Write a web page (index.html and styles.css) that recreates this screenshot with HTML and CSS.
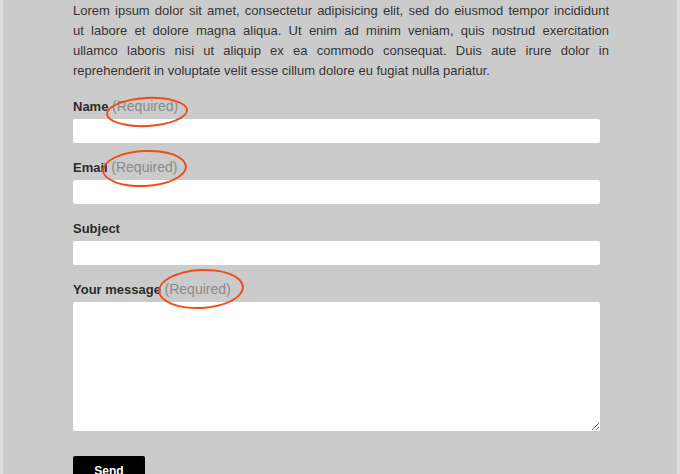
FILE: index.html
```html
<!DOCTYPE html>
<html lang="en">
<head>
<meta charset="utf-8">
<title>Contact form</title>
<link rel="stylesheet" href="styles.css">
</head>
<body>
<div class="page">
  <div class="content">
    <p class="intro">
      <span class="line">Lorem ipsum dolor sit amet, consectetur adipisicing elit, sed do eiusmod tempor incididunt</span>
      <span class="line">ut labore et dolore magna aliqua. Ut enim ad minim veniam, quis nostrud exercitation</span>
      <span class="line">ullamco laboris nisi ut aliquip ex ea commodo consequat. Duis aute irure dolor in</span>
      <span class="line last">reprehenderit in voluptate velit esse cillum dolore eu fugiat nulla pariatur.</span>
    </p>
    <form class="form">
      <div class="field">
        <label class="label">Name <span class="req">(Required)</span><span class="ring ring-name"></span></label>
        <input class="input" type="text">
      </div>
      <div class="field">
        <label class="label">Email <span class="req">(Required)</span><span class="ring ring-email"></span></label>
        <input class="input" type="text">
      </div>
      <div class="field">
        <label class="label">Subject</label>
        <input class="input" type="text">
      </div>
      <div class="field">
        <label class="label">Your message <span class="req">(Required)</span><span class="ring ring-msg"></span></label>
        <textarea class="input area"></textarea>
      </div>
      <button class="send" type="button">Send</button>
    </form>
  </div>
</div>
</body>
</html>
```
FILE: styles.css
```css
html, body {
  margin: 0;
  padding: 0;
}
body {
  background: #dedede;
  font-family: "Liberation Sans", Arial, sans-serif;
  overflow: hidden;
}
.page {
  margin: 0 3px;
  background: #cbcbcb;
  height: 474px;
  overflow: hidden;
}
.content {
  padding: 1px 0 0 70px;
}
.intro {
  margin: 0;
  width: 536px;
  font-size: 13px;
  line-height: 20px;
  color: #353535;
}
.line {
  display: block;
  white-space: nowrap;
  text-align: justify;
  text-align-last: justify;
}
.line.last {
  text-align-last: left;
}
.form {
  margin-top: 18px;
  display: flex;
  flex-direction: column;
  align-items: flex-start;
}
.field {
  display: flex;
  flex-direction: column;
  gap: 4px;
  margin-bottom: 17px;
}
.label {
  position: relative;
  display: block;
  height: 16px;
  font-size: 13px;
  line-height: 16px;
  font-weight: bold;
  color: #2b2b2b;
  white-space: nowrap;
}
.req {
  font-weight: normal;
  font-size: 14px;
  line-height: 1;
  color: #8a8a8a;
}
.ring {
  position: absolute;
  border: 2.5px solid #f04c1a;
  border-radius: 50%;
  box-sizing: border-box;
  transform: rotate(-3deg);
}
.ring-name {
  left: 33px;
  top: -2px;
  width: 82px;
  height: 30px;
}
.ring-email {
  left: 29px;
  top: -10px;
  width: 85px;
  height: 37px;
}
.ring-msg {
  left: 85px;
  top: -13px;
  width: 86px;
  height: 40px;
}
.input {
  width: 527px;
  height: 24px;
  border: none;
  border-radius: 2px;
  background: #ffffff;
  box-sizing: border-box;
  margin: 0;
  padding: 4px 6px;
  font-family: "Liberation Sans", Arial, sans-serif;
  font-size: 12px;
  outline: none;
}
.area {
  height: 129px;
  resize: both;
  display: block;
}
.send {
  margin-top: 8px;
  width: 72px;
  height: 30px;
  background: #000000;
  color: #ffffff;
  border: none;
  border-radius: 2px;
  font-family: "Liberation Sans", Arial, sans-serif;
  font-size: 12px;
  font-weight: bold;
  padding: 0;
}
```
